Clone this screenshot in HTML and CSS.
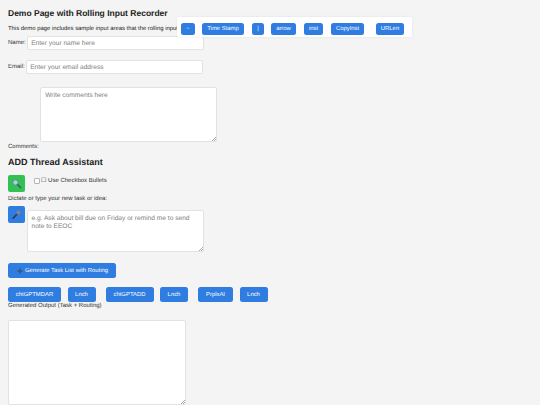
FILE: index.html
```html
<!DOCTYPE html>
<html lang="en">
<head>
    <meta charset="UTF-8">
    <meta name="viewport" content="width=device-width, initial-scale=1.0">
    <title>Demo Page with Rolling Input Recorder</title>
    <link rel="stylesheet" href="styles.css">
</head>
<body>
    <div class="toolbar">
        <button class="button tool-tilde">~</button>
        <button class="button tool-stamp">Time Stamp</button>
        <button class="button tool-pipe">|</button>
        <button class="button tool-arrow">arrow</button>
        <button class="button tool-inst">inst</button>
        <button class="button tool-copy">CopyInst</button>
        <button class="button tool-url">URLen</button>
    </div>

    <h1>Demo Page with Rolling Input Recorder</h1>
    <p class="intro">This demo page includes sample input areas that the rolling input recorder can capture.</p>

    <div class="field field-name">
        <label>Name:</label>
        <input type="text" class="name-input" placeholder="Enter your name here">
    </div>
    <div class="field field-email">
        <label>Email:</label>
        <input type="text" class="name-input" placeholder="Enter your email address">
    </div>
    <div class="field field-comments">
        <label>Comments:</label>
        <textarea class="comments-input" placeholder="Write comments here"></textarea>
    </div>

    <h2>ADD Thread Assistant</h2>

    <div class="search-row">
        <button class="icon-button green">
            <svg viewBox="0 0 16 16" width="11" height="11">
                <circle cx="6.5" cy="6.5" r="4" fill="#9fd4d8" stroke="#4f8c88" stroke-width="1.4"/>
                <path d="M9.6 9.6 L14 14" stroke="#3d6660" stroke-width="2.2" stroke-linecap="round"/>
            </svg>
        </button>
        <label class="check-label"><input type="checkbox" class="check">☐ Use Checkbox Bullets</label>
    </div>

    <div class="dictate-label">Dictate or type your new task or idea:</div>
    <div class="dictate-row">
        <button class="icon-button blue">
            <svg viewBox="0 0 16 16" width="11" height="11">
                <path d="M9.5 6.5 L3 13.5" stroke="#2f3540" stroke-width="2.2" stroke-linecap="round"/>
                <circle cx="10.8" cy="5" r="3.2" fill="#7a8494"/>
            </svg>
        </button>
        <textarea class="task-input" placeholder="e.g. Ask about bill due on Friday or remind me to send note to EEOC"></textarea>
    </div>

    <button class="button generate">
        <svg viewBox="0 0 16 16" width="8" height="8">
            <path d="M8 1 L10 6 L15 8 L10 10 L8 15 L6 10 L1 8 L6 6 Z" fill="#3f5878"/>
        </svg>
        Generate Task List with Routing
    </button>

    <div class="launch-row">
        <button class="button launch w-mdar">chtGPTMDAR</button>
        <button class="button launch w-lnch">Lnch</button>
        <button class="button launch w-add gap-left">chtGPTADD</button>
        <button class="button launch w-lnch">Lnch</button>
        <button class="button launch w-prplx gap-left">PrplxAI</button>
        <button class="button launch w-lnch">Lnch</button>
    </div>

    <div class="output-label">Generated Output (Task + Routing)</div>
    <textarea class="output"></textarea>
</body>
</html>
```

FILE: styles.css
```css
html, body {
    height: 405px;
    overflow: hidden;
}
body {
    font-family: "Liberation Sans", Arial, sans-serif;
    margin: 0;
    padding: 7px 8px 0;
    box-sizing: border-box;
    background-color: #f4f4f4;
    color: #222;
    font-size: 6px;
    text-rendering: geometricPrecision;
}
h1 {
    font-size: 8.5px;
    line-height: 12px;
    margin: 0;
}
h2 {
    font-size: 9px;
    line-height: 12px;
    margin: 14px 0 0;
}
.intro {
    margin: 6px 0 0;
    line-height: 8px;
    font-size: 5.9px;
    white-space: nowrap;
}
label {
    color: #333;
}
input, textarea {
    font-family: "Liberation Sans", Arial, sans-serif;
    text-rendering: geometricPrecision;
    box-sizing: border-box;
    background: white;
    border: 1px solid #e2e2e2;
    border-radius: 2px;
    margin: 0;
    outline: none;
}
input::placeholder, textarea::placeholder {
    color: #808080;
}
textarea::-webkit-resizer {
    background: linear-gradient(135deg, transparent 50%, #aaa 50%, #aaa 60%, transparent 60%, transparent 75%, #aaa 75%, #aaa 85%, transparent 85%) no-repeat right bottom / 5px 5px;
}
.field {
    display: flex;
    align-items: center;
    gap: 1.5px;
}
.field-name {
    margin-top: 3px;
}
.field-email {
    margin-top: 10px;
}
.field-comments {
    margin-top: 13px;
    align-items: flex-end;
}
.field-comments label {
    line-height: 8px;
    margin-bottom: -9px;
}
.name-input {
    width: 177px;
    height: 14px;
    font-size: 6.6px;
    padding: 0 3px;
}
.comments-input {
    width: 177px;
    height: 55px;
    font-size: 6.6px;
    padding: 4px;
}
.button {
    background-color: #2f7de1;
    color: white;
    border: none;
    border-radius: 2.5px;
    font-family: "Liberation Sans", Arial, sans-serif;
    text-rendering: geometricPrecision;
    font-size: 5.9px;
    padding: 0;
    height: 15px;
    flex-shrink: 0;
}
.toolbar {
    position: absolute;
    left: 177px;
    top: 17px;
    width: 235px;
    height: 20px;
    box-sizing: border-box;
    background: white;
    border-radius: 2px;
    box-shadow: 0 0 3px rgba(0, 0, 0, 0.08);
    display: flex;
    align-items: flex-end;
    padding: 0 0 2px 4px;
}
.toolbar .button {
    height: 12px;
}
.tool-tilde {
    width: 14px;
}
.tool-stamp {
    width: 42px;
    margin-left: 7px;
}
.tool-pipe {
    width: 12px;
    margin-left: 8px;
}
.tool-arrow {
    width: 25px;
    margin-left: 7px;
}
.tool-inst {
    width: 19px;
    margin-left: 8px;
}
.tool-copy {
    width: 33px;
    margin-left: 8px;
}
.tool-url {
    width: 28px;
    margin-left: 12px;
}
.search-row {
    display: flex;
    align-items: flex-start;
    margin-top: 7px;
}
.icon-button {
    width: 17px;
    height: 17px;
    border: none;
    border-radius: 2px;
    padding: 0;
    display: flex;
    align-items: center;
    justify-content: center;
    flex-shrink: 0;
}
.green {
    background-color: #34c154;
}
.blue {
    background-color: #2f7de1;
}
.check-label {
    display: flex;
    align-items: center;
    gap: 1.5px;
    margin: 2px 0 0 8.5px;
    line-height: 8px;
    white-space: pre;
}
.check {
    appearance: none;
    width: 6px;
    height: 6px;
    margin: 0;
    border: 1px solid #b5b5b5;
    border-radius: 1px;
}
.dictate-label {
    margin-top: 3px;
    line-height: 8px;
    color: #333;
}
.dictate-row {
    display: flex;
    align-items: flex-start;
    gap: 1.5px;
    margin-top: 3px;
}
.task-input {
    width: 177px;
    height: 42px;
    margin-top: 4px;
    font-size: 6.6px;
    line-height: 7.6px;
    padding: 4px;
}
.generate {
    display: flex;
    align-items: center;
    gap: 1px;
    width: 108px;
    margin-top: 11px;
    padding-left: 8px;
    white-space: nowrap;
}
.launch-row {
    display: flex;
    gap: 6.5px;
    margin-top: 9px;
}
.w-mdar {
    width: 53px;
}
.w-lnch {
    width: 28px;
}
.w-add {
    width: 48px;
}
.w-prplx {
    width: 35px;
}
.gap-left {
    margin-left: 3.5px;
}
.output-label {
    margin-top: 0;
    line-height: 8px;
    color: #333;
}
.output {
    display: block;
    width: 178px;
    height: 85px;
    margin-top: 10px;
}
```
